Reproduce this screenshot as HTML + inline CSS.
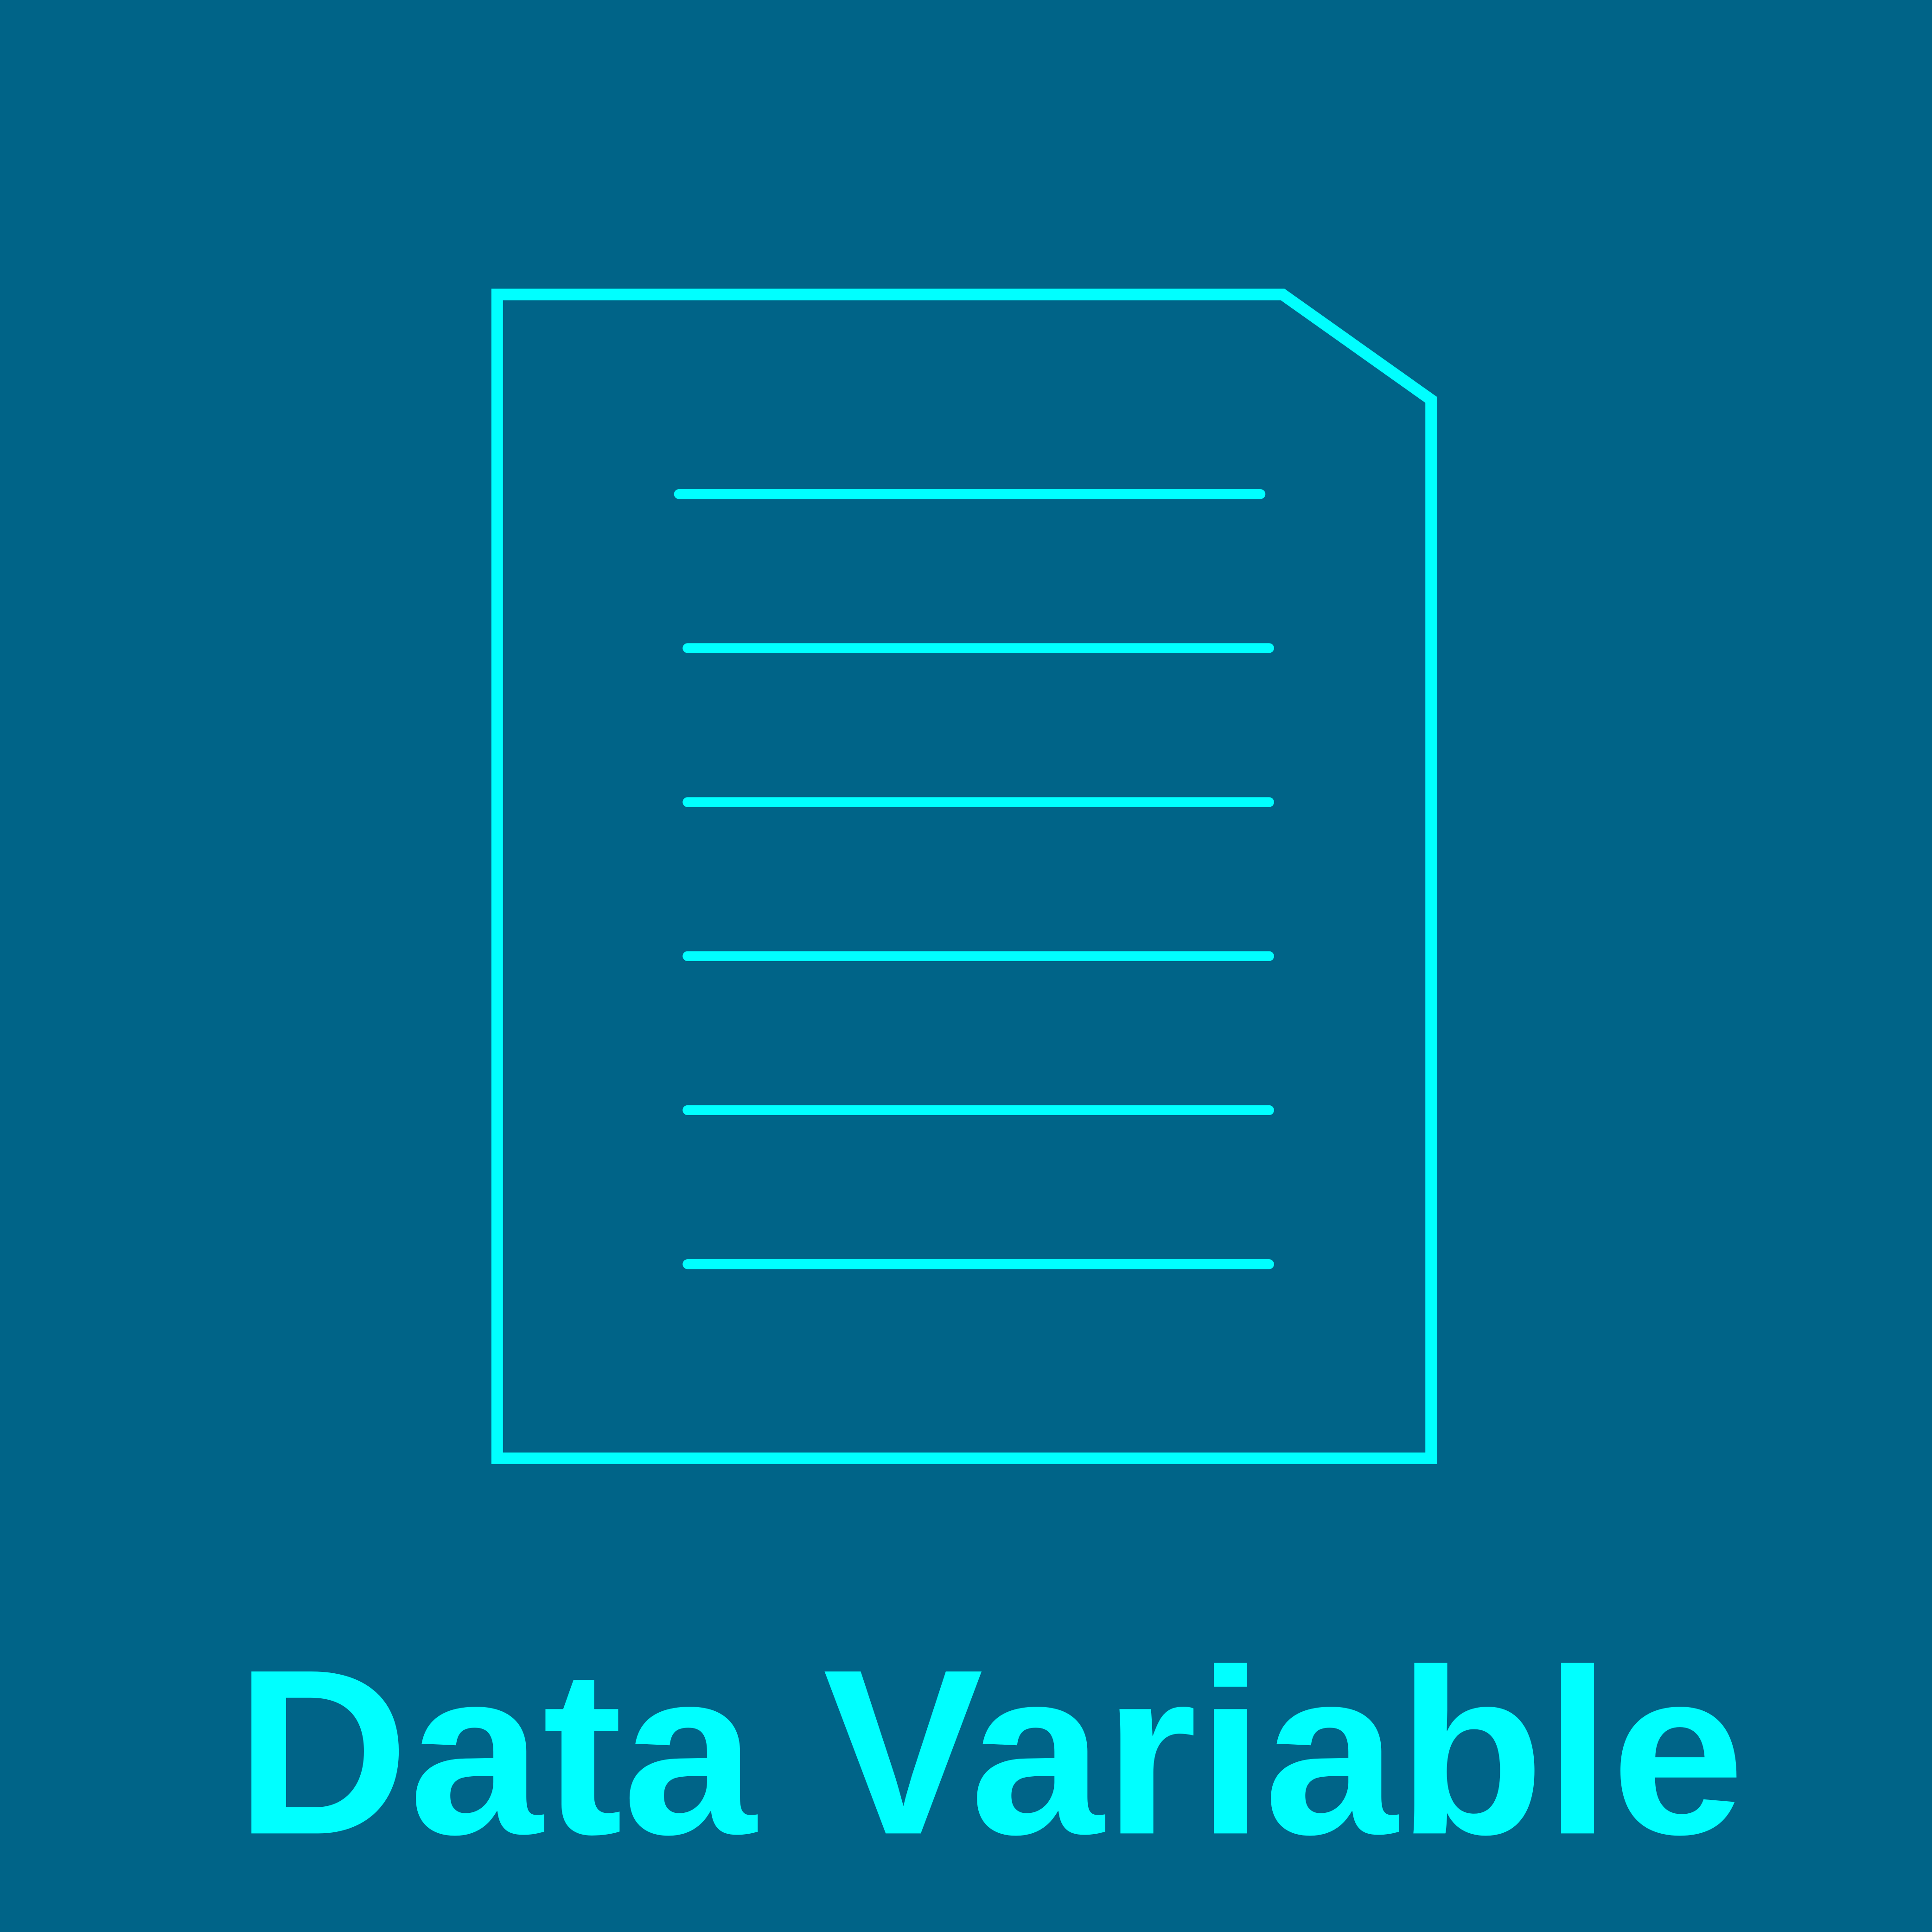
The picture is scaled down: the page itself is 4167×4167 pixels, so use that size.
<!DOCTYPE html>
<html><head><meta charset="utf-8"><style>
html,body{margin:0;padding:0;background:#006488;}
svg{display:block;}
</style></head><body>
<svg width="4167" height="4167" viewBox="0 0 1568 1568" xmlns="http://www.w3.org/2000/svg">
<rect width="1568" height="1568" fill="#006488"/>
<polygon points="403.5,239 1041,239 1161.5,324.5 1161.5,1183.5 403.5,1183.5" fill="none" stroke="#00FFFF" stroke-width="9.4"/>
<g stroke="#00FFFF" stroke-width="8" stroke-linecap="round">
<line x1="551" y1="401" x2="1023" y2="401"/>
<line x1="558" y1="526" x2="1030" y2="526"/>
<line x1="558" y1="651" x2="1030" y2="651"/>
<line x1="558" y1="776" x2="1030" y2="776"/>
<line x1="558" y1="901" x2="1030" y2="901"/>
<line x1="558" y1="1026" x2="1030" y2="1026"/>
</g>
<text x="191" y="1488" font-family="Liberation Sans, sans-serif" font-weight="bold" font-size="191" fill="#00FFFF" textLength="1225" lengthAdjust="spacingAndGlyphs">Data Variable</text>
</svg>
</body></html>
